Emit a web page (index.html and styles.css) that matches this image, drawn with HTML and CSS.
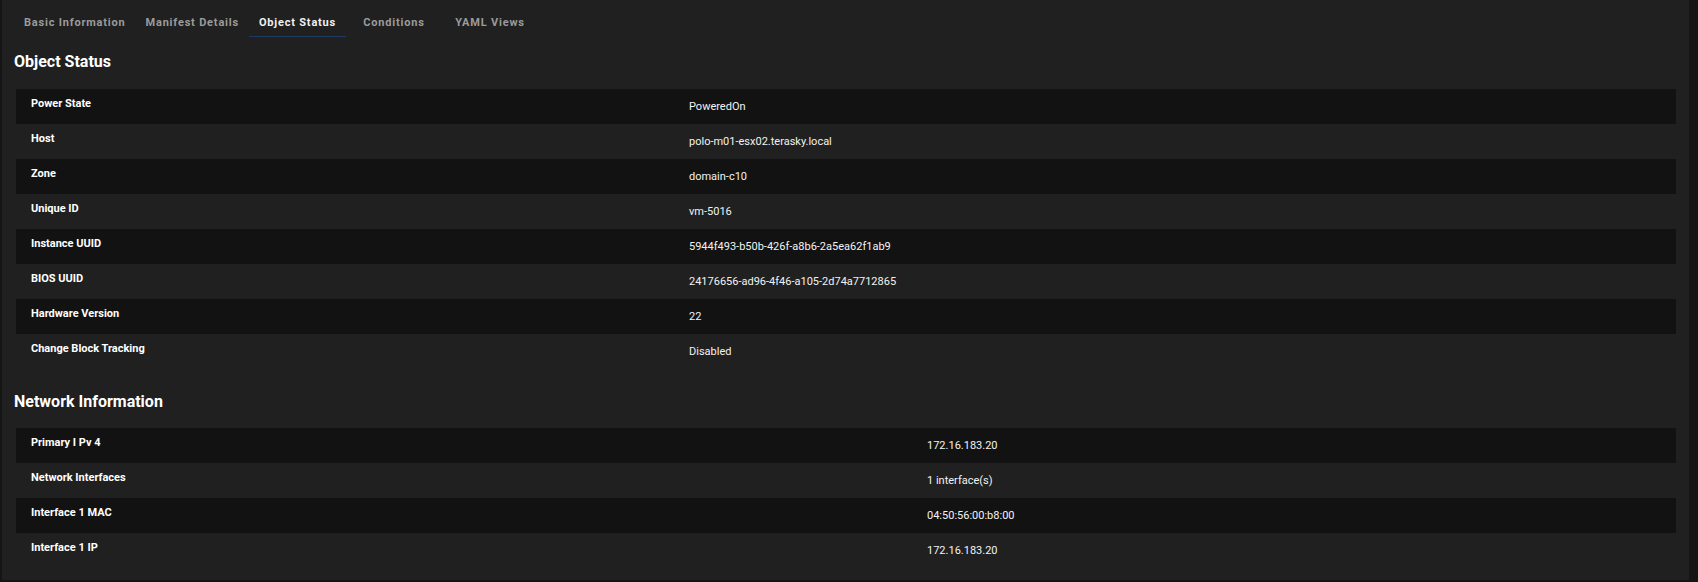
FILE: index.html
```html
<!DOCTYPE html>
<html lang="en">
<head>
<meta charset="utf-8">
<title>Object Status</title>
<link rel="stylesheet" href="styles.css">
</head>
<body>
<div class="panel">
  <nav class="tabs">
    <div class="tab">Basic Information</div>
    <div class="tab">Manifest Details</div>
    <div class="tab active">Object Status</div>
    <div class="tab">Conditions</div>
    <div class="tab">YAML Views</div>
  </nav>

  <h2 class="heading first">Object Status</h2>
  <div class="table t1">
    <div class="row"><div class="label">Power State</div><div class="value">PoweredOn</div></div>
    <div class="row"><div class="label">Host</div><div class="value">polo-m01-esx02.terasky.local</div></div>
    <div class="row"><div class="label">Zone</div><div class="value">domain-c10</div></div>
    <div class="row"><div class="label">Unique ID</div><div class="value">vm-5016</div></div>
    <div class="row"><div class="label">Instance UUID</div><div class="value">5944f493-b50b-426f-a8b6-2a5ea62f1ab9</div></div>
    <div class="row"><div class="label">BIOS UUID</div><div class="value">24176656-ad96-4f46-a105-2d74a7712865</div></div>
    <div class="row"><div class="label">Hardware Version</div><div class="value">22</div></div>
    <div class="row"><div class="label">Change Block Tracking</div><div class="value">Disabled</div></div>
  </div>

  <h2 class="heading">Network Information</h2>
  <div class="table t2">
    <div class="row"><div class="label">Primary I Pv 4</div><div class="value">172.16.183.20</div></div>
    <div class="row"><div class="label">Network Interfaces</div><div class="value">1 interface(s)</div></div>
    <div class="row"><div class="label">Interface 1 MAC</div><div class="value">04:50:56:00:b8:00</div></div>
    <div class="row"><div class="label">Interface 1 IP</div><div class="value">172.16.183.20</div></div>
  </div>
</div>
</body>
</html>
```
FILE: styles.css
```css
* { box-sizing: border-box; }

html, body {
  margin: 0;
  padding: 0;
  background: #151515;
  font-family: Roboto, "Liberation Sans", Arial, sans-serif;
}

.panel {
  width: 1687px;
  height: 580px;
  margin-left: 2px;
  background: #202020;
  padding: 0 13px 12px 12px;
}

.tabs {
  display: flex;
  height: 37px;
}

.tab {
  min-width: 96px;
  height: 37px;
  padding: 16px 10px 0;
  text-align: center;
  font-size: 11px;
  line-height: 13px;
  font-weight: 700;
  letter-spacing: 0.8px;
  color: #9b9b9b;
  border-bottom: 1px solid transparent;
  white-space: nowrap;
}

.tab.active {
  color: #f0f0f0;
  border-bottom-color: #1d3b63;
}

.heading {
  margin: 23px 0 16px 0;
  font-size: 16px;
  line-height: 20px;
  font-weight: 700;
  color: #ffffff;
}

.heading.first {
  margin-top: 15px;
  margin-bottom: 17px;
}

.table {
  display: grid;
  margin-left: 2px;
}

.row {
  display: grid;
  height: 35px;
}

.t1 .row { grid-template-columns: 657px 1fr; }
.t2 .row { grid-template-columns: 895px 1fr; }

.row:nth-child(odd) { background: #121212; }

.label {
  padding: 8px 15px 0;
  font-size: 11px;
  line-height: 14px;
  font-weight: 700;
  color: #ffffff;
}

.value {
  padding: 11px 16px 0;
  font-size: 11px;
  line-height: 14px;
  color: #f2f2f2;
}
```
